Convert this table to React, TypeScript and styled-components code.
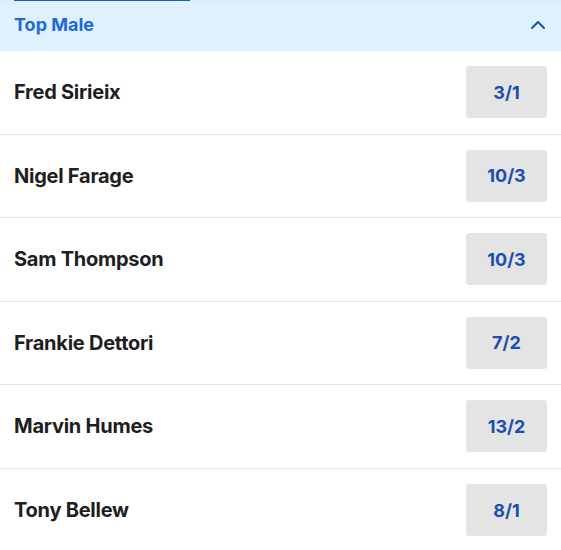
import React from 'react';
import styled, {createGlobalStyle} from "styled-components";

const Global = createGlobalStyle`
  body {
    margin: 0;
    background: #ffffff;
    font-family: Inter, "Noto Sans", Arial, sans-serif;
  }
`

const Market = styled.div`
  width: 561px;
  display: flex;
  flex-direction: column;
`

const TabStrip = styled.div`
  height: 1px;
  background: #e6e8ea;
  display: flex;
`

const ActiveTab = styled.div`
  margin-left: 14px;
  width: 176px;
  height: 1px;
  background: #1c5bb8;
`

const Header = styled.div`
  height: 50px;
  background: #dff0fe;
  display: flex;
  align-items: center;
  justify-content: space-between;
  padding: 0 14px 2px 14px;
  box-sizing: border-box;
`

const HeaderTitle = styled.span`
  font-size: 18px;
  font-weight: 700;
  color: #1d6bd6;
  margin-bottom: 2px;
`

const Row = styled.div`
  height: 83.5px;
  display: flex;
  align-items: center;
  justify-content: space-between;
  padding: 0 14px;
  box-sizing: border-box;
  border-bottom: 1px solid #e3e3e3;
  &:last-child {
    border-bottom: none;
  }
`

const Runner = styled.span`
  font-size: 20px;
  font-weight: 700;
  color: #1e1e22;
  letter-spacing: -0.25px;
`

const Odds = styled.button`
  width: 81px;
  height: 52px;
  border: none;
  border-radius: 3px;
  background: #e4e4e4;
  color: #1b4fae;
  font-family: inherit;
  font-size: 18px;
  font-weight: 700;
  display: flex;
  align-items: center;
  justify-content: center;
  padding: 0;
`

const runners = [
    {name: 'Fred Sirieix', odds: '3/1'},
    {name: 'Nigel Farage', odds: '10/3'},
    {name: 'Sam Thompson', odds: '10/3'},
    {name: 'Frankie Dettori', odds: '7/2'},
    {name: 'Marvin Humes', odds: '13/2'},
    {name: 'Tony Bellew', odds: '8/1'},
]

const App = () => {
    return (
        <>
            <Global/>
            <Market>
                <TabStrip><ActiveTab/></TabStrip>
                <Header>
                    <HeaderTitle>Top Male</HeaderTitle>
                    <svg width="18" height="18" viewBox="0 0 18 18">
                        <path d="M3 12 L9 6 L15 12" fill="none" stroke="#1c4fa8" strokeWidth="2" strokeLinecap="round" strokeLinejoin="round"/>
                    </svg>
                </Header>
                {runners.map(r => (
                    <Row key={r.name}>
                        <Runner>{r.name}</Runner>
                        <Odds>{r.odds}</Odds>
                    </Row>
                ))}
            </Market>
        </>
    );
};

export default App;
